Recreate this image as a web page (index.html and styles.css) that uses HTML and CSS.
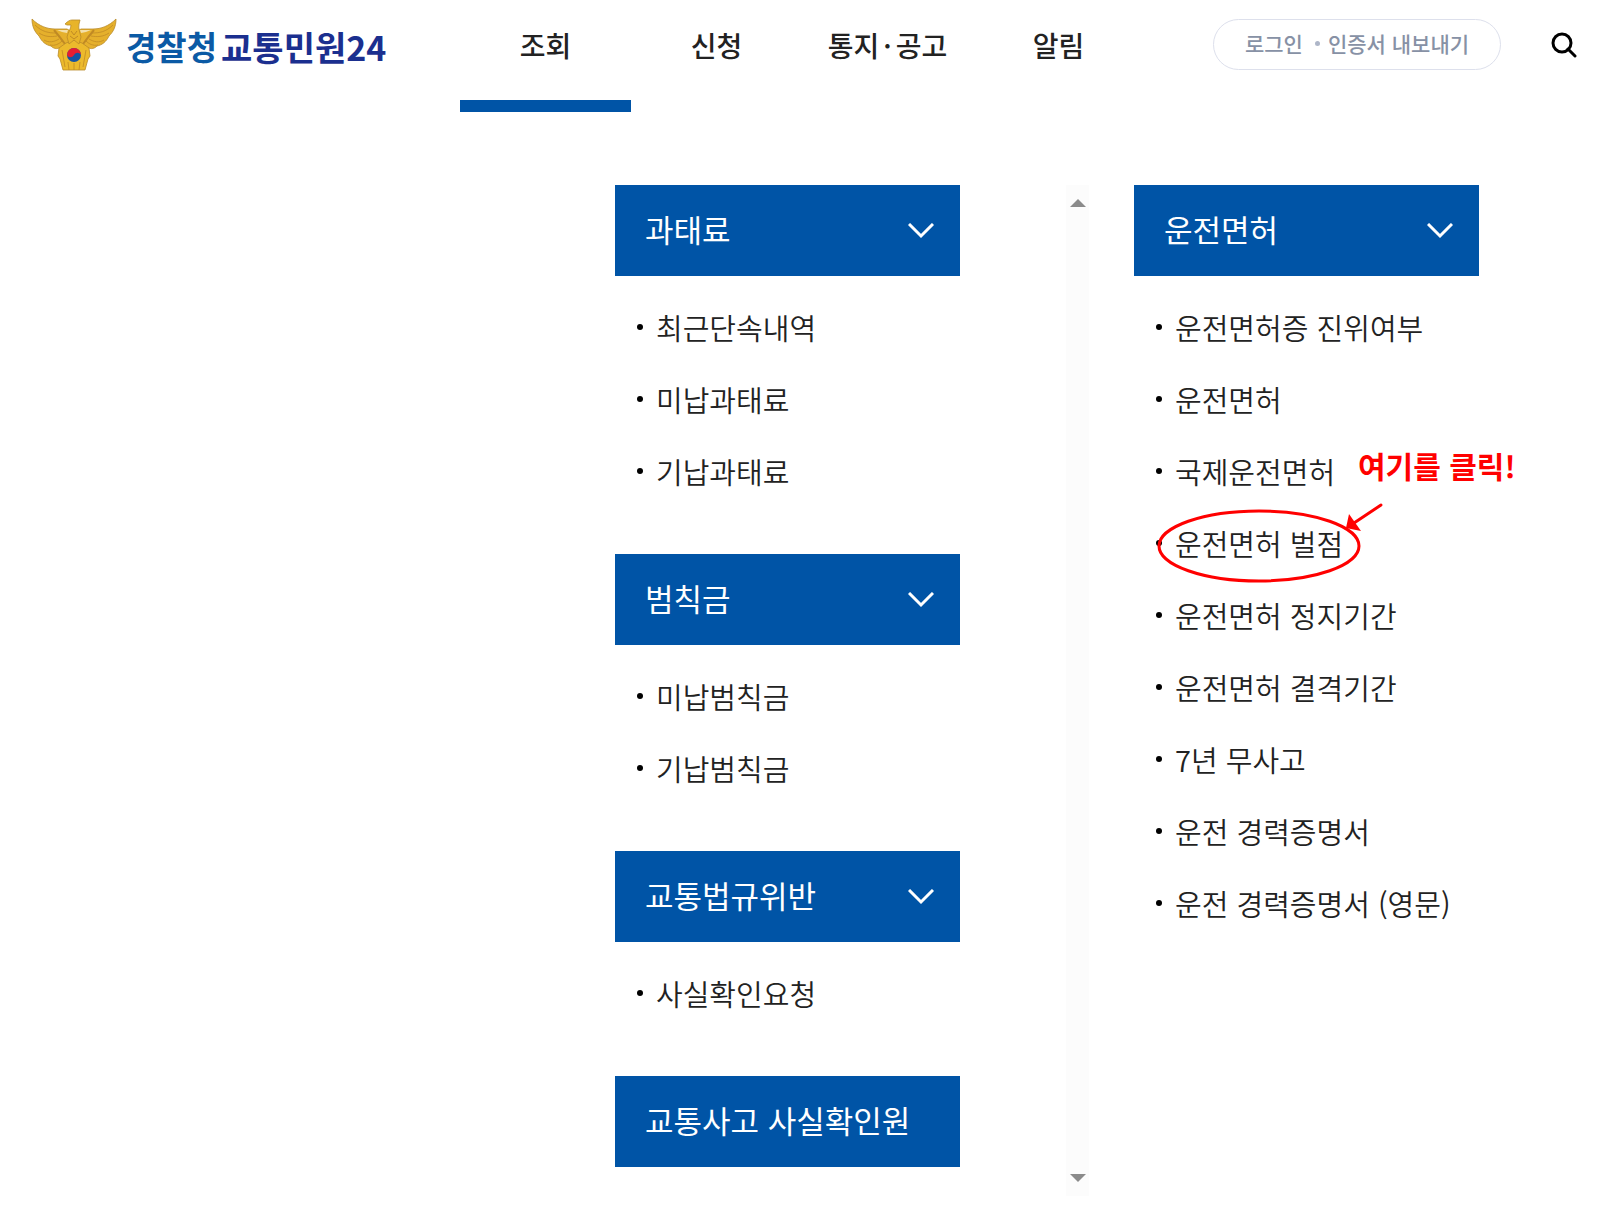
FILE: index.html
```
<!DOCTYPE html>
<html lang="ko">

<head>
    <meta charset="UTF-8">
    <meta name="viewport" content="width=device-width, initial-scale=1.0">
    <title>경찰청 교통민원24</title>
    <link rel="stylesheet" href="styles.css">
</head>

<body>
    <header class="header">
        <a class="logo" href="#">
            <svg class="emblem" viewBox="0 0 84 51" aria-hidden="true">
                <!-- wings -->
                <path d="M0 0C7 7 15 10 23 10L35 10L42 14L49 10L61 10C69 10 77 7 84 0C84 8 81 13 77 17C74 23 70 26 65 27C62 30 59 30 57 29L27 29C25 30 22 30 19 27C14 26 10 23 7 17C3 13 0 8 0 0Z" fill="#e5b02c" stroke="#b98a2a" stroke-width="0.8"/>
                <path d="M3 6C10 13 17 14 24 14M7 14C13 18 19 18 25 17M12 21C17 24 22 23 27 20M18 26C23 27 27 25 30 22M81 6C74 13 67 14 60 14M77 14C71 18 65 18 59 17M72 21C67 24 62 23 57 20M66 26C61 27 57 25 54 22" fill="none" stroke="#c08a24" stroke-width="0.8"/>
                <path d="M22 11C27 17 30 21 33 25M62 11C57 17 54 21 51 25" fill="none" stroke="#c08a24" stroke-width="2"/>
                <path d="M25 11L36 11L35 14L30 13ZM59 11L48 11L49 14L54 13Z" fill="#f3dfa8"/>
                <!-- body -->
                <path d="M27 29L34 24L42 21L50 24L57 29L58 37L56 40L53 51L31 51L28 40L26 37Z" fill="#ecba2c" stroke="#b98a2a" stroke-width="0.8"/>
                <path d="M30 31L33 48M54 31L51 48M36 43L37 51M42 44L42 51M48 43L47 51" fill="none" stroke="#c08a24" stroke-width="0.8"/>
                <!-- head -->
                <path d="M48 1L40 1C38 1 36 2 33 5L35 6L39 6C39 10 36 13 35 18L37 25L42 21L47 25L49 18C48 14 46 9 47 5Z" fill="#e8b42a" stroke="#b98a2a" stroke-width="0.8"/>
                <path d="M39 12L42 16L45 12M38 17L42 20L46 17" fill="none" stroke="#c08a24" stroke-width="1"/>
                <circle cx="42" cy="36" r="7" fill="#1454a4"/>
                <path d="M35 36A7 7 0 0 1 49 36C47 33 44 33 42 36C40 39 37 39 35 36Z" fill="#e61e32"/>
            </svg>
            <span class="logo-text">
                <span>경찰청</span>
                <span class="logo-name">교통민원24</span>
            </span>
        </a>

        <nav class="nav">
            <a class="active" href="#">조회</a>
            <a href="#">신청</a>
            <a href="#">통지<span class="middot">·</span>공고</a>
            <a href="#">알림</a>
        </nav>

        <div class="tools">
            <div class="account">
                <a href="#">로그인</a>
                <span class="dot"></span>
                <a href="#">인증서 내보내기</a>
            </div>
            <button type="button" class="search" aria-label="검색">
                <svg viewBox="0 0 26 26" aria-hidden="true">
                    <circle cx="11" cy="11" r="9" />
                    <path d="M17 17L24 24" />
                </svg>
            </button>
        </div>
    </header>

    <main class="menu">
        <div class="column">
            <section>
                <button type="button" class="title">과태료
                    <svg viewBox="0 0 26 16" aria-hidden="true"><path d="M1 1L13 13L25 1" /></svg>
                </button>
                <ul class="list">
                    <li><a href="#">최근단속내역</a></li>
                    <li><a href="#">미납과태료</a></li>
                    <li><a href="#">기납과태료</a></li>
                </ul>
            </section>
            <section>
                <button type="button" class="title">범칙금
                    <svg viewBox="0 0 26 16" aria-hidden="true"><path d="M1 1L13 13L25 1" /></svg>
                </button>
                <ul class="list">
                    <li><a href="#">미납범칙금</a></li>
                    <li><a href="#">기납범칙금</a></li>
                </ul>
            </section>
            <section>
                <button type="button" class="title">교통법규위반
                    <svg viewBox="0 0 26 16" aria-hidden="true"><path d="M1 1L13 13L25 1" /></svg>
                </button>
                <ul class="list">
                    <li><a href="#">사실확인요청</a></li>
                </ul>
            </section>
            <a class="title" href="#">교통사고 사실확인원</a>
        </div>

        <div class="scroll">
            <span class="up"></span>
            <span class="down"></span>
        </div>

        <div class="column">
            <section>
                <button type="button" class="title">운전면허
                    <svg viewBox="0 0 26 16" aria-hidden="true"><path d="M1 1L13 13L25 1" /></svg>
                </button>
                <ul class="list">
                    <li><a href="#">운전면허증 진위여부</a></li>
                    <li><a href="#">운전면허</a></li>
                    <li><a href="#">국제운전면허</a></li>
                    <li>
                        <a href="#">운전면허 벌점</a>
                        <!-- click guide -->
                        <svg class="mark" viewBox="0 0 240 90" aria-hidden="true">
                            <ellipse cx="105" cy="46" rx="100" ry="35" />
                            <path d="M227 5L197 25" />
                            <path class="tip" d="M192 28L195 14L207 31Z" />
                        </svg>
                        <strong class="hint">여기를 클릭!</strong>
                    </li>
                    <li><a href="#">운전면허 정지기간</a></li>
                    <li><a href="#">운전면허 결격기간</a></li>
                    <li><a href="#">7년 무사고</a></li>
                    <li><a href="#">운전 경력증명서</a></li>
                    <li><a href="#">운전 경력증명서 (영문)</a></li>
                </ul>
            </section>
        </div>
    </main>
</body>

</html>
```
FILE: styles.css
```
* {
    margin: 0;
    padding: 0;
    box-sizing: border-box;
}

body {
    font-family: "Noto Sans CJK KR", sans-serif;
    background: #fff;
    color: #222;
}

a {
    color: inherit;
    text-decoration: none;
}

button {
    border: none;
    background: none;
    font-family: inherit;
    cursor: pointer;
}

.header {
    display: grid;
    grid-template-columns: 428px minmax(0, 684px) 1fr;
    height: 112px;
    padding: 0 33px 0 32px;
}

.logo {
    display: flex;
    align-items: center;
    gap: 10px;
    height: 51px;
    margin-top: 19px;
}

.emblem {
    width: 84px;
    height: 51px;
    overflow: visible;
}

.logo-text {
    display: flex;
    gap: 4px;
    padding-top: 4px;
    font-size: 33px;
    line-height: 51px;
    font-weight: 700;
    color: #0b5aa5;
    white-space: nowrap;
}

.logo-name {
    font-size: 34px;
    color: #1b2f8f;
}

.nav {
    display: grid;
    grid-template-columns: repeat(4, 1fr);
}

.nav a {
    border-bottom: 12px solid transparent;
    padding-top: 20px;
    font-size: 28px;
    line-height: 51px;
    font-weight: 500;
    text-align: center;
    white-space: nowrap;
}

.nav a.active {
    border-color: #0054a6;
}

.middot {
    padding: 0 4px;
}

.tools {
    display: flex;
    justify-content: flex-end;
    align-items: center;
    gap: 50px;
    height: 51px;
    margin-top: 19px;
}

.account {
    display: flex;
    align-items: center;
    justify-content: center;
    gap: 8px;
    width: 288px;
    height: 51px;
    padding-bottom: 2px;
    border: 1px solid #dde0ec;
    border-radius: 26px;
    font-size: 21px;
    line-height: 47px;
    font-weight: 500;
    color: #8791a5;
    white-space: nowrap;
}

.dot {
    width: 5px;
    height: 5px;
    margin-left: 4px;
    border-radius: 50%;
    background: #aeb6c8;
}

.search {
    width: 28px;
    height: 28px;
}

.search svg {
    display: block;
    width: 26px;
    height: 26px;
    fill: none;
    stroke: #000;
    stroke-width: 3;
    stroke-linecap: round;
}

.menu {
    display: flex;
    justify-content: flex-end;
    padding: 73px 133px 19px 0;
}

.column {
    width: 345px;
    padding-bottom: 29px;
}

.title {
    display: flex;
    align-items: center;
    justify-content: space-between;
    width: 100%;
    height: 91px;
    padding: 0 26px 4px 30px;
    background: #0054a6;
    color: #fff;
    font-size: 31px;
    font-weight: 400;
    white-space: nowrap;
}

.title svg {
    width: 26px;
    height: 16px;
    margin-top: 4px;
    fill: none;
    stroke: #fff;
    stroke-width: 3;
}

.list {
    list-style: none;
    padding: 15px 0 47px;
}

.list li {
    position: relative;
    display: flex;
    align-items: center;
    gap: 13px;
    height: 72px;
    padding-left: 22px;
    font-size: 29px;
    font-weight: 350;
    white-space: nowrap;
}

.list li::before {
    content: "";
    width: 6px;
    height: 6px;
    border-radius: 50%;
    background: #000;
}

.scroll {
    display: flex;
    flex-direction: column;
    justify-content: space-between;
    align-items: center;
    width: 23px;
    margin: 0 45px 0 106px;
    padding: 14px 0;
    background: #fcfcfc;
}

.up,
.down {
    border-left: 8px solid transparent;
    border-right: 8px solid transparent;
}

.up {
    border-bottom: 8px solid #8b8b8b;
}

.down {
    border-top: 8px solid #8b8b8b;
}

.mark {
    position: absolute;
    left: 20px;
    top: -7px;
    width: 240px;
    height: 90px;
    fill: none;
    stroke: #f00;
    stroke-width: 3;
    stroke-linecap: round;
    pointer-events: none;
}

.mark .tip {
    fill: #f00;
    stroke: none;
}

.hint {
    position: absolute;
    left: 224px;
    top: -64px;
    font-size: 30px;
    line-height: 44px;
    font-weight: 700;
    color: #f00;
}
```
